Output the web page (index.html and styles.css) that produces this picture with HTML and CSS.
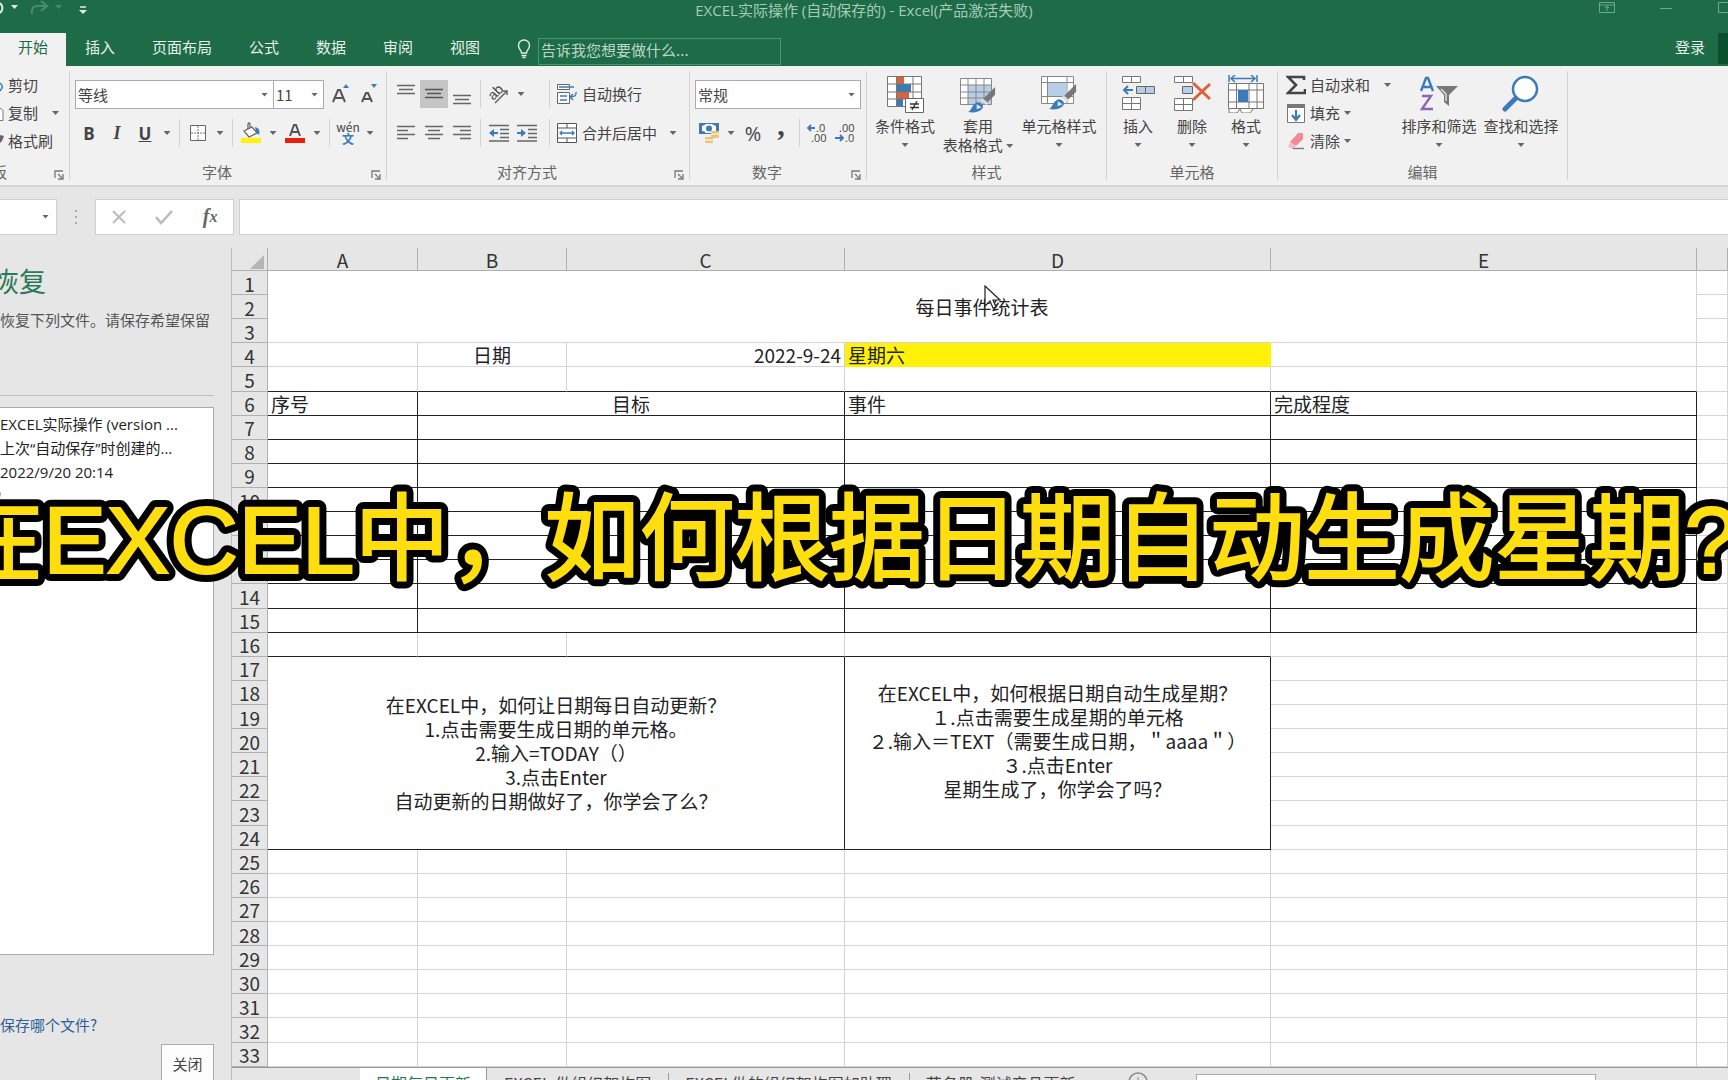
FILE: index.html
```html
<!DOCTYPE html>
<html lang="zh-CN">
<head>
<meta charset="utf-8">
<title>EXCEL实际操作</title>
<link rel="stylesheet" href="styles.css">
</head>
<body>
<svg width="0" height="0" class="defs" aria-hidden="true">
  <symbol id="launch" viewBox="0 0 10 10"><path d="M1 8V1h8M4 4l4 4M9 4v5H4" fill="none" stroke="#777" stroke-width="1.3"/></symbol>
  <symbol id="brush" viewBox="0 0 30 28"><path d="M28 1v8l-8 8-4-4z" fill="#777"/><path d="M15 13l6 5-2 2-6-5z" fill="#ddd"/><path d="M0 27c4-2 4-8 9-10 4-1 8 3 6 6-3 4-9 5-15 4z" fill="#3d7ab8"/><path d="M9 19l5 3-5 2z" fill="#dce8f4"/></symbol>
</svg>
<div class="app">
  <header class="top">
    <div class="titlebar">
      <svg class="quick" width="90" height="22" viewBox="0 0 90 22"><path d="M0 3q5 5 0 10" fill="none" stroke="#e0eee6" stroke-width="2"/><path d="M11 5h7l-3.500 4z" fill="#e0eee6"/><path d="M46 6H36q-5 1-4 8M41 1l6 5-6 5" fill="none" stroke="#4b8b6c" stroke-width="2"/><path d="M55 5h7l-3.500 4z" fill="#4b8b6c"/><path d="M80 7h6" stroke="#e0eee6" stroke-width="1.500"/><path d="M79 10h8l-4 4z" fill="#e0eee6"/></svg>
      <span class="doc-title">EXCEL实际操作 (自动保存的) - Excel(产品激活失败)</span>
      <svg class="winctl" width="130" height="22" viewBox="0 0 130 22"><path d="M1.500 2.500h15v10h-15zM1.500 5h15M9 11V6M7 8l2-2 2 2M62 8.500h12M120.500 2.500h12v10h-12z" fill="none" stroke="#6fa78b"/></svg>
    </div>
    <nav class="tabs">
      <button class="tab on">开始</button><button class="tab">插入</button><button class="tab">页面布局</button><button class="tab">公式</button><button class="tab">数据</button><button class="tab">审阅</button><button class="tab">视图</button>
      <svg class="bulb" width="14" height="20" viewBox="0 0 14 20"><path d="M4.500 14c0-3-3-4-3-7.500a5.500 5.500 0 0 1 11 0c0 3.500-3 4.500-3 7.500zM4.500 16.500h5M5.500 18.500h3" fill="none" stroke="#e0eee6" stroke-width="1.400"/></svg>
      <input class="tell" type="text" placeholder="告诉我您想要做什么..." aria-label="告诉我您想要做什么">
      <a class="login" href="#">登录</a><button class="share" aria-label="共享"></button>
    </nav>
  </header>

  <section class="ribbon">
    <div class="group g-clip">
      <div class="stack">
        <button class="small"><svg width="4" height="20"><path d="M0 8q3 2 2 5l-2 3" fill="none" stroke="#3d7ab8" stroke-width="1.500"/></svg>剪切</button>
        <button class="small"><svg width="4" height="20"><path d="M0 5.500h1l2 2v10H0" fill="#fff" stroke="#777"/></svg>复制<i class="caret far"></i></button>
        <button class="small"><svg width="4" height="20"><path d="M0 4l4 1-2 5-2 2z" fill="#666"/></svg>格式刷</button>
      </div>
      <div class="glabel start">板<svg class="launch"><use href="#launch"/></svg></div>
    </div>

    <div class="group g-font">
      <div class="rows">
        <div class="row">
          <div class="combo c-font"><input value="等线" aria-label="字体"><i class="caret"></i></div>
          <div class="combo c-size"><input value="11" aria-label="字号"><i class="caret"></i></div>
          <button class="ib" aria-label="增大字号"><svg width="20" height="22"><path d="M2 19L7 7h2l5 12M4 15h8" fill="none" stroke="#555" stroke-width="2"/><path d="M12 5l3-4 3 4z" fill="#3d7ab8"/></svg></button>
          <button class="ib" aria-label="减小字号"><svg width="20" height="22"><path d="M3 19L7 10h2l4 9M5 16h6" fill="none" stroke="#555" stroke-width="2"/><path d="M12 1h6l-3 4z" fill="#3d7ab8"/></svg></button>
        </div>
        <div class="row">
          <button class="ib bold">B</button><button class="ib ital">I</button><button class="ib under">U</button><button class="ar" aria-label="下划线选项"><i class="caret"></i></button>
          <i class="sep"></i>
          <button class="ib" aria-label="边框"><svg width="18" height="18"><path d="M1.500 1.500h15v15h-15z" fill="#fff" stroke="#666"/><path d="M9 2v14M2 9h14" stroke="#777" stroke-dasharray="2 1"/></svg></button><button class="ar" aria-label="边框选项"><i class="caret"></i></button>
          <i class="sep"></i>
          <button class="ib" aria-label="填充颜色"><svg width="22" height="22"><path d="M4 9l8-4 5 6-8 4zM8 8V2q1-2 2 0v5" fill="#fff" stroke="#666" stroke-width="1.300"/><path d="M15 5q6 1 4 8l-3-3z" fill="#3d7ab8"/><path d="M1 16h20v5H1z" fill="#fff10a"/></svg></button><button class="ar" aria-label="填充颜色选项"><i class="caret"></i></button>
          <button class="ib" aria-label="字体颜色"><svg width="22" height="22"><path d="M6 14L10 3h2l4 11M8 10h6" fill="none" stroke="#555" stroke-width="2"/><path d="M1 16h20v5H1z" fill="#ef1c10"/></svg></button><button class="ar" aria-label="字体颜色选项"><i class="caret"></i></button>
          <i class="sep"></i>
          <button class="ib wen"><span>wén</span><b>文</b></button><button class="ar" aria-label="拼音选项"><i class="caret"></i></button>
        </div>
      </div>
      <div class="glabel shift">字体<svg class="launch"><use href="#launch"/></svg></div>
    </div>

    <div class="group g-align">
      <div class="rows">
        <div class="row">
          <button class="ib" aria-label="顶端对齐"><svg width="18" height="22"><path d="M0 2.500h18M2 6.500h14M0 10.500h18" stroke="#666" stroke-width="1.300"/></svg></button><button class="ib sel" aria-label="垂直居中"><svg width="18" height="22"><path d="M0 6.500h18M2 10.500h14M0 14.500h18" stroke="#555" stroke-width="1.300"/></svg></button><button class="ib" aria-label="底端对齐"><svg width="18" height="22"><path d="M0 12.500h18M2 16.500h14M0 20.500h18" stroke="#666" stroke-width="1.300"/></svg></button>
          <i class="sep"></i>
          <div class="pair"><button class="ib" aria-label="方向"><svg width="22" height="22"><text x="1" y="14" transform="rotate(-45 8 11)" font-family="Liberation Sans" font-size="14" fill="#444">ab</text><path d="M7 20L19 8M15 8h4v4" fill="none" stroke="#666" stroke-width="1.500"/></svg></button><button class="ar" aria-label="方向选项"><i class="caret"></i></button></div>
          <i class="sep"></i>
          <button class="tb"><svg width="22" height="22"><path d="M1.500 1.500h12v5h-12zM1.500 9.500h12v11h-12z" fill="#fff" stroke="#666"/><path d="M3 4h15M4 13h7M4 17h7" stroke="#3d7ab8" stroke-width="1.300"/><path d="M20 9q1 5-6 5M17 11l-3 3 3 3" fill="none" stroke="#3d7ab8" stroke-width="1.500"/></svg>自动换行</button>
        </div>
        <div class="row">
          <button class="ib" aria-label="左对齐"><svg width="18" height="16"><path d="M0 1.500h18M0 5.500h11M0 9.500h18M0 13.500h11" stroke="#666" stroke-width="1.300"/></svg></button><button class="ib" aria-label="居中"><svg width="18" height="16"><path d="M0 1.500h18M3 5.500h12M0 9.500h18M3 13.500h12" stroke="#666" stroke-width="1.300"/></svg></button><button class="ib" aria-label="右对齐"><svg width="18" height="16"><path d="M0 1.500h18M7 5.500h11M0 9.500h18M7 13.500h11" stroke="#666" stroke-width="1.300"/></svg></button>
          <i class="sep"></i>
          <div class="pair"><button class="ib" aria-label="减少缩进"><svg width="22" height="18"><path d="M1 1.500h20M12 5.500h9M12 9.500h9M12 13.500h9M1 17h20" stroke="#666" stroke-width="1.300"/><path d="M1 9l5-4v3h4v2H6v3z" fill="#3d7ab8"/></svg></button><button class="ib" aria-label="增加缩进"><svg width="22" height="18"><path d="M1 1.500h20M12 5.500h9M12 9.500h9M12 13.500h9M1 17h20" stroke="#666" stroke-width="1.300"/><path d="M10 9L5 5v3H1v2h4v3z" fill="#3d7ab8"/></svg></button></div>
          <i class="sep"></i>
          <button class="tb"><svg width="22" height="22"><path d="M1.500 1.500h19v19h-19zM1.500 6h19M1.500 16h19M11 2v4M11 16v4" fill="#fff" stroke="#555"/><path d="M4 11h14M6 9l-2 2 2 2M16 9l2 2-2 2" fill="none" stroke="#3d7ab8" stroke-width="1.300"/></svg>合并后居中</button><button class="ar gap" aria-label="合并选项"><i class="caret"></i></button>
        </div>
      </div>
      <div class="glabel shift">对齐方式<svg class="launch"><use href="#launch"/></svg></div>
    </div>

    <div class="group g-num">
      <div class="rows">
        <div class="row"><div class="combo c-num"><input value="常规" aria-label="数字格式"><i class="caret"></i></div></div>
        <div class="row">
          <button class="ib" aria-label="会计数字格式"><svg width="22" height="22"><path d="M1 1h20v11H1z" fill="#3d7ab8"/><path d="M4 4q3-1 4-2h6q1 1 4 2v5q-3 0-4 2H8q-1-2-4-2z" fill="#fff"/><circle cx="11" cy="6.500" r="3" fill="#3d7ab8"/><path d="M13 9h8v7h-8zM7 15h8v6H7z" fill="#eac27c"/><path d="M13 12h8M7 18h8" stroke="#fff"/></svg></button><button class="ar" aria-label="会计格式选项"><i class="caret"></i></button><button class="ib pct">%</button><button class="ib comma" aria-label="千位分隔">,</button>
          <i class="sep"></i>
          <button class="ib dec" aria-label="增加小数位数"><svg width="22" height="20"><path d="M8 5H1M4 2L1 5l3 3" fill="none" stroke="#3d7ab8" stroke-width="1.800"/><text x="9" y="9">.0</text><text x="4" y="19">.00</text></svg></button><button class="ib dec" aria-label="减少小数位数"><svg width="22" height="20"><path d="M0 15h8M5 12l3 3-3 3" fill="none" stroke="#3d7ab8" stroke-width="1.800"/><text x="4" y="9">.00</text><text x="10" y="19">.0</text></svg></button>
        </div>
      </div>
      <div class="glabel shift">数字<svg class="launch"><use href="#launch"/></svg></div>
    </div>

    <div class="group g-style">
      <div class="bigs">
        <button class="big w1"><svg width="38" height="38"><path d="M1.500 1.500h34v30h-34z" fill="#fff"/><path d="M11 2h7v7h-7zM11 17h12v7H11z" fill="#d9643a"/><path d="M11 9h14v8H11zM11 24h6v8h-6z" fill="#3d7ab8"/><path d="M1.500 1.500h34v30h-34zM1.500 9h34M1.500 17h34M1.500 24h34M10.500 1v31M27 1v31" fill="none" stroke="#777"/><path d="M19.500 23.500h18v14h-18z" fill="#fff" stroke="#666"/><path d="M24 29h9M24 32.500h9M31 26l-5 9" stroke="#333" stroke-width="1.300"/></svg><span>条件格式</span><i class="caret"></i></button>
        <button class="big w2"><svg width="38" height="38"><path d="M1.500 3.500h31v26h-31z" fill="#fff"/><path d="M9 10h23v19H9z" fill="#b8cde6"/><path d="M1.500 3.500h31v26h-31zM1.500 10h31M1.500 17h31M1.500 23h31M9 3v27M17 3v27M25 3v27" fill="none" stroke="#888"/><use href="#brush" x="9" y="11" width="29" height="27"/></svg><span>套用</span><span>表格格式 <i class="caret"></i></span></button>
        <button class="big w3"><svg width="38" height="38"><path d="M1.500 1.500h32v27h-32z" fill="#fff"/><path d="M8 8h18v13H8z" fill="#b8cde6"/><path d="M1.500 1.500h32v27h-32zM1.500 7.500h32M1.500 21.500h32M7.500 1v28M27 1v28" fill="none" stroke="#888"/><use href="#brush" x="9" y="8" width="29" height="27"/></svg><span>单元格样式</span><i class="caret"></i></button>
      </div>
      <div class="glabel">样式</div>
    </div>

    <div class="group g-cell">
      <div class="bigs">
        <button class="big w4"><svg width="38" height="38"><path d="M3.500 1.500h18v6h-18zM12.500 1v7M3.500 22.500h18v12h-18zM12.500 22v13M3.500 28.500h18" fill="#fff" stroke="#777"/><path d="M17.500 11.500h18v7h-18zM26.500 11v8" fill="#b8cde6" stroke="#666"/><path d="M14 15H6M9 11l-4 4 4 4" fill="none" stroke="#3d7ab8" stroke-width="2"/></svg><span>插入</span><i class="caret"></i></button>
        <button class="big w4"><svg width="38" height="38"><path d="M1.500 1.500h18v6h-18zM10.500 1v7M1.500 23.500h18v12h-18zM10.500 23v13M1.500 29.500h18" fill="#fff" stroke="#777"/><path d="M9.500 11.500h10v7h-10z" fill="#b8cde6" stroke="#666"/><path d="M20 8l17 16M37 9L20 25" stroke="#e0603a" stroke-width="3"/></svg><span>删除</span><i class="caret"></i></button>
        <button class="big w4"><svg width="38" height="38"><path d="M1.500 8.500h35v25h-35zM1.500 15h35M1.500 27h35M9.500 8v25M22 8v25M30 8v25" fill="#fff" stroke="#777"/><path d="M11 15h10v12H11z" fill="#3d7ab8"/><path d="M2 0v7M30 0v7M4 3.500h24M8 0L4 3.500 8 7M24 0l4 3.500L24 7" fill="none" stroke="#3d7ab8" stroke-width="1.500"/><path d="M2 34v4h8l3-4 2 4h8l3-4" fill="#fff" stroke="#777"/></svg><span>格式</span><i class="caret"></i></button>
      </div>
      <div class="glabel">单元格</div>
    </div>

    <div class="group g-edit">
      <div class="bigs">
        <div class="stack edit">
          <button class="small"><svg width="20" height="20"><path d="M18 5V2H2l8 8-8 8h17v-4" fill="none" stroke="#444" stroke-width="2.600"/></svg>自动求和<i class="caret far"></i></button>
          <button class="small"><svg width="20" height="20"><path d="M1.500 1.500h17v18h-17z" fill="#fff" stroke="#777"/><path d="M1 1h18v4H1z" fill="#777"/><path d="M10 7v10M6 12l4 5 4-5" fill="none" stroke="#3d7ab8" stroke-width="2.200"/></svg>填充<i class="caret"></i></button>
          <button class="small"><svg width="20" height="20"><path d="M12 2h5v6l-7 7-6-4z" fill="#f08a98"/><path d="M4 11l6 4-3 3-5-2z" fill="#f6bcc4"/><path d="M7 17.500h11" stroke="#777" stroke-width="1.300"/></svg>清除<i class="caret"></i></button>
        </div>
        <button class="big w5"><svg width="38" height="38"><path d="M1 16L6 3h2l5 13M3 12h8" fill="none" stroke="#3d7ab8" stroke-width="2.400"/><path d="M2 21h9L2 34h11" fill="none" stroke="#8d66b5" stroke-width="2.400"/><path d="M16 11h22l-9 9v11l-5-4v-7z" fill="#777"/><path d="M21 14l5 5v7" fill="none" stroke="#ddd" stroke-width="1.500"/></svg><span>排序和筛选</span><i class="caret"></i></button>
        <button class="big w5"><svg width="38" height="38"><path d="M3 34L15 22" stroke="#3d7ab8" stroke-width="5" stroke-linecap="round"/><circle cx="23" cy="14" r="12" fill="#fff" stroke="#3d7ab8" stroke-width="2.500"/></svg><span>查找和选择</span><i class="caret"></i></button>
      </div>
      <div class="glabel">编辑</div>
    </div>
  </section>

  <section class="fbar">
    <div class="namebox"><input aria-label="名称框"><i class="caret"></i></div>
    <svg class="dots" width="4" height="16"><path d="M1 1h2v2H1zM1 7h2v2H1zM1 13h2v2H1z" fill="#aaa"/></svg>
    <div class="fx">
      <button aria-label="取消"><svg width="16" height="16"><path d="M2 2l12 12M14 2L2 14" stroke="#bbb" stroke-width="2"/></svg></button>
      <button aria-label="输入"><svg width="18" height="16"><path d="M1 8l5 6L17 2" fill="none" stroke="#bbb" stroke-width="2.500"/></svg></button>
      <button class="fxb">f<sub>x</sub></button>
    </div>
    <input class="formula" aria-label="编辑栏">
  </section>

  <main class="main">
    <aside class="pane">
      <h2>恢复</h2>
      <p>恢复下列文件。请保存希望保留</p>
      <div class="files"><div>EXCEL实际操作 (version ...</div><div>上次“自动保存”时创建的...</div><div>2022/9/20 20:14</div></div>
      <div class="foot"><a href="#">保存哪个文件?</a><button>关闭</button></div>
    </aside>
    <section class="sheet">
      <div class="gridwrap">
      <table class="grid">
        <colgroup><col class="k-h"><col class="k-a"><col class="k-b"><col class="k-c"><col class="k-d"><col class="k-d"><col></colgroup>
        <thead><tr><th class="corner"><svg width="14" height="14"><path d="M14 0v14H0z" fill="#b5b5b5"/></svg></th><th>A</th><th>B</th><th>C</th><th>D</th><th>E</th><th></th></tr></thead>
        <tbody>
          <tr><th>1</th><td colspan="5" rowspan="3" class="c">每日事件统计表</td><td></td></tr>
          <tr><th>2</th><td></td></tr>
          <tr><th>3</th><td></td></tr>
          <tr><th>4</th><td></td><td class="c">日期</td><td class="r">2022-9-24</td><td class="hl">星期六</td><td></td><td></td></tr>
          <tr class="ub"><th>5</th><td></td><td></td><td></td><td></td><td></td><td></td></tr>
          <tr class="bx"><th>6</th><td>序号</td><td colspan="2" class="c">目标</td><td>事件</td><td>完成程度</td><td></td></tr>
          <tr class="bx"><th>7</th><td></td><td colspan="2"></td><td></td><td></td><td></td></tr>
          <tr class="bx"><th>8</th><td></td><td colspan="2"></td><td></td><td></td><td></td></tr>
          <tr class="bx"><th>9</th><td></td><td colspan="2"></td><td></td><td></td><td></td></tr>
          <tr class="bx"><th>10</th><td></td><td colspan="2"></td><td></td><td></td><td></td></tr>
          <tr class="bx"><th>11</th><td></td><td colspan="2"></td><td></td><td></td><td></td></tr>
          <tr class="bx"><th>12</th><td></td><td colspan="2"></td><td></td><td></td><td></td></tr>
          <tr class="bx"><th>13</th><td></td><td colspan="2"></td><td></td><td></td><td></td></tr>
          <tr class="bx"><th>14</th><td></td><td colspan="2"></td><td></td><td></td><td></td></tr>
          <tr class="bx"><th>15</th><td></td><td colspan="2"></td><td></td><td></td><td></td></tr>
          <tr><th>16</th><td class="u"></td><td class="u"></td><td class="u"></td><td class="u"></td><td></td><td></td></tr>
          <tr><th>17</th><td colspan="3" rowspan="8" class="note">在EXCEL中，如何让日期每日自动更新？<br>1.点击需要生成日期的单元格。<br>2.输入=TODAY（）<br>3.点击Enter<br>自动更新的日期做好了，你学会了么？</td><td rowspan="8" class="note">在EXCEL中，如何根据日期自动生成星期？<br>１.点击需要生成星期的单元格<br>２.输入＝TEXT（需要生成日期，＂aaaa＂）<br>３.点击Enter<br>星期生成了，你学会了吗？<br>&nbsp;</td><td></td><td></td></tr>
          <tr><th>18</th><td></td><td></td></tr>
          <tr><th>19</th><td></td><td></td></tr>
          <tr><th>20</th><td></td><td></td></tr>
          <tr><th>21</th><td></td><td></td></tr>
          <tr><th>22</th><td></td><td></td></tr>
          <tr><th>23</th><td></td><td></td></tr>
          <tr><th>24</th><td></td><td></td></tr>
          <tr><th>25</th><td></td><td></td><td></td><td></td><td></td><td></td></tr>
          <tr><th>26</th><td></td><td></td><td></td><td></td><td></td><td></td></tr>
          <tr><th>27</th><td></td><td></td><td></td><td></td><td></td><td></td></tr>
          <tr><th>28</th><td></td><td></td><td></td><td></td><td></td><td></td></tr>
          <tr><th>29</th><td></td><td></td><td></td><td></td><td></td><td></td></tr>
          <tr><th>30</th><td></td><td></td><td></td><td></td><td></td><td></td></tr>
          <tr><th>31</th><td></td><td></td><td></td><td></td><td></td><td></td></tr>
          <tr><th>32</th><td></td><td></td><td></td><td></td><td></td><td></td></tr>
          <tr><th>33</th><td></td><td></td><td></td><td></td><td></td><td></td></tr>
        </tbody>
      </table>
      </div>
      <div class="sheets">
        <button class="st on">日期每日更新</button><button class="st">EXCEL-做组织架构图</button><button class="st">EXCEL做的组织架构图加助理</button><button class="st last">花名册-测试产品更新</button>
        <svg class="add" width="20" height="20"><circle cx="10" cy="10" r="9" fill="none" stroke="#888" stroke-width="1.500"/><path d="M10 5v10M5 10h10" stroke="#888"/></svg>
        <div class="hscroll"></div>
      </div>
    </section>
  </main>
  <svg class="cursor" width="18" height="24"><path d="M1 1v20l5-5 3 7 3-1-3-7h7z" fill="#fff" stroke="#222" stroke-width="1.200"/></svg>
  <h1 class="caption">
    <svg width="1800" height="110">
      <defs><text id="cap" x="0" y="90">在EXCEL中，如何根据日期自动生成星期?</text></defs>
      <use href="#cap" class="cap-edge"/>
      <use href="#cap" class="cap-face"/>
    </svg>
  </h1>
</div>
</body>
</html>
```
FILE: styles.css
```css
* { box-sizing: border-box; }
body { margin: 0; font: 15px/20px "Noto Sans CJK SC", sans-serif; color: #444; background: #e6e6e6; }
button, input { font: inherit; color: inherit; border: 0; background: none; padding: 0; margin: 0; min-width: 0; outline: 0; }
button { white-space: nowrap; }
svg { display: block; flex: none; }
a { text-decoration: none; }
.defs { position: absolute; }
.app { position: relative; display: flex; flex-direction: column; height: 100vh; overflow: hidden; }
.caret { display: inline-block; flex: none; width: 7px; height: 4px; background: #666; clip-path: polygon(0 0, 100% 0, 50% 100%); }

.top { background: #1e6b47; color: #e6f1eb; }
.titlebar { display: grid; grid-template-columns: 1fr auto 1fr; height: 33px; }
.doc-title { color: #a5cbb8; white-space: nowrap; font-family: "Open Sans", "Noto Sans CJK SC", sans-serif; }
.winctl { justify-self: end; }
.tabs { display: flex; height: 33px; gap: 1px; }
.tab { padding: 0 18px 5px; line-height: 28px; }
.tab.on { background: #f1f1f1; color: #1e6b47; }
.bulb { margin: 6px 6px 0 18px; }
.tell { width: 243px; height: 27px; margin-top: 5px; padding: 0 0 5px 2px; border: 1px solid #4d9470; }
.tell::placeholder { color: #b9d8c8; opacity: 1; }
.login { margin-left: auto; margin-right: 12px; color: #e6f1eb; line-height: 28px; }
.share { width: 10px; height: 31px; background: #0c4f2d; }

.ribbon { display: flex; height: 121px; padding: 5px 0; background: #f1f1f1; border-bottom: 2px solid #d4d4d4; }
.group { display: flex; flex-direction: column; flex: none; border-right: 1px solid #d4d4d4; }
.g-clip { width: 70px; }
.g-font { width: 317px; }
.g-align { width: 303px; }
.g-num { width: 177px; }
.g-style { width: 240px; }
.g-cell { width: 171px; }
.g-edit { width: 290px; }
.rows { flex: 1; display: flex; flex-direction: column; gap: 11px; padding: 9px 0 0 5px; }
.row { display: flex; height: 28px; }
.glabel { position: relative; height: 16px; line-height: 16px; text-align: center; color: #666; }
.glabel.start { text-align: left; text-indent: -8px; }
.glabel.shift { padding-right: 22px; }
.launch { position: absolute; right: 5px; bottom: 0; width: 10px; height: 10px; }
.ib { display: flex; align-items: center; justify-content: center; width: 28px; height: 28px; flex: none; }
.sel { background: #c5c5c5; }
.ar { display: flex; align-items: center; justify-content: center; width: 16px; flex: none; }
.ar.gap { margin-left: 8px; }
.sep { width: 1px; flex: none; margin: 0 4px; background: #d4d4d4; }
.pair { display: flex; width: 60px; }
.tb { display: flex; align-items: center; gap: 4px; padding-left: 2px; }
.bold { font: bold 17px "Open Sans", sans-serif; }
.ital { font: italic bold 18px "Liberation Serif", serif; }
.under { font: bold 17px "Open Sans", sans-serif; text-decoration: underline; }
.wen { flex-direction: column; font-size: 12px; line-height: 11px; }
.wen b { color: #3d7ab8; line-height: 14px; }
.pct { font: 20px "Open Sans", sans-serif; }
.comma { font: bold 30px/20px "Liberation Serif", serif; padding-bottom: 16px; }
.dec text { font: 11px "Open Sans", sans-serif; fill: #444; }
.combo { display: flex; align-items: center; height: 29px; padding: 0 5px 0 2px; background: #fff; border: 1px solid #ababab; }
.combo input { flex: 1; }
.c-font { width: 199px; }
.c-size { width: 51px; margin: 0 3px 0 -1px; }
.c-num { width: 166px; }
.bigs { flex: 1; display: flex; padding-left: 4px; }
.big { display: flex; flex-direction: column; align-items: center; padding-top: 4px; flex: none; line-height: 19px; }
.big svg { margin-bottom: 3px; }
.big > .caret { margin-top: 8px; }
.big span .caret { vertical-align: 3px; }
.w1 { width: 68px; }
.w2 { width: 78px; }
.w3 { width: 84px; }
.w4 { width: 54px; }
.w5 { width: 82px; }
.stack { flex: 1; display: flex; flex-direction: column; }
.stack.edit { flex: none; width: 116px; padding-left: 4px; }
.small { display: flex; align-items: center; height: 28px; gap: 4px; }
.far { margin-left: 10px; }

.fbar { display: flex; flex: none; align-items: center; height: 61px; padding-bottom: 2px; }
.namebox, .fx, .formula { height: 36px; background: #fff; border: 1px solid #cfcfcf; }
.namebox { display: flex; align-items: center; width: 57px; padding-right: 7px; border-left: 0; }
.namebox input { flex: 1; }
.dots { margin: 0 17px; }
.fx { display: grid; grid-template-columns: repeat(3, 1fr); width: 139px; margin-right: 5px; }
.fx button { display: flex; align-items: center; justify-content: center; }
.fxb { font: italic bold 20px "Liberation Serif", serif; color: #666; }
.fxb sub { font-size: 16px; vertical-align: -2px; }
.formula { flex: 1; border-right: 0; }

.main { flex: 1; display: flex; min-height: 0; }
.pane { flex: none; display: flex; flex-direction: column; width: 231px; padding-right: 17px; }
.pane h2 { margin: 18px 0 14px -8px; font-size: 27px; line-height: 30px; font-weight: 400; color: #2b7a57; }
.pane p { margin: 0 0 11px; padding-bottom: 65px; border-bottom: 1px solid #c0c0c0; white-space: nowrap; color: #555; }
.files { flex: 1; padding-top: 4px; background: #fff; border: 1px solid #ababab; border-left: 0; color: #222; line-height: 24px; white-space: nowrap; font-family: "Open Sans", "Noto Sans CJK SC", sans-serif; }
.foot { display: flex; flex-direction: column; height: 125px; flex: none; padding-top: 60px; gap: 9px; }
.foot a { color: #2f5f97; }
.foot button { align-self: flex-end; width: 53px; height: 40px; flex: none; background: #fdfdfd; border: 1px solid #ababab; }

.sheet { flex: 1; display: flex; flex-direction: column; min-width: 0; border-left: 1px solid #bdbdbd; }
.gridwrap { flex: 1; min-height: 0; }
.grid { width: 100%; height: 100%; table-layout: fixed; border-collapse: separate; border-spacing: 0; font-size: 19px; line-height: 20px; color: #222; background: #fff; }
.k-h { width: 36px; }
.k-a { width: 150px; }
.k-b { width: 149px; }
.k-c { width: 278px; }
.k-d { width: 426px; }
.grid th { padding: 2px 0 0; font-weight: 400; background: #e6e6e6; border-right: 1px solid #b0b0b0; border-bottom: 1px solid #b0b0b0; color: #333; }
.grid .corner svg { margin: 3px 3px 0 auto; }
.grid td { padding: 1px 3px 0; white-space: nowrap; border-right: 1px solid #d4d4d4; border-bottom: 1px solid #d4d4d4; }
.grid .c { text-align: center; }
.grid .r { text-align: right; }
.grid .hl { background: #fff10a; border-color: #fff10a; }
.ub td:not(:last-child), .grid .u { border-bottom-color: #222; }
.bx td:not(:last-child) { border-color: #222; }
.grid .note { padding: 0; text-align: center; line-height: 24px; border-color: #222; }

.sheets { display: flex; flex: none; height: 13px; overflow: hidden; padding-left: 128px; border-top: 1px solid #999; }
.st { flex: none; height: 30px; padding: 0 17px; font-size: 16px; }
.st + .st::after { content: ""; display: inline-block; width: 1px; height: 20px; margin: 0 -18px 0 17px; vertical-align: top; background: #999; }
.st.last::after { display: none; }
.st.on { padding: 0 15px; color: #1e7a4b; background: #fff; border-right: 1px solid #999; }
.add { margin: 4px 48px 0 36px; }
.hscroll { width: 400px; height: 20px; margin-top: 6px; background: #fff; border: 1px solid #aaa; }

.cursor { position: absolute; left: 984px; top: 285px; }
.caption { position: absolute; left: -52px; top: 483px; margin: 0; font: 400 95px/110px "Liberation Sans", "Noto Sans CJK SC", sans-serif; }
.caption svg { overflow: visible; }
.cap-edge { fill: #000; stroke: #000; stroke-width: 16px; stroke-linejoin: round; }
.cap-face { fill: #ffde0f; stroke: #ffde0f; stroke-width: 2px; }
```
